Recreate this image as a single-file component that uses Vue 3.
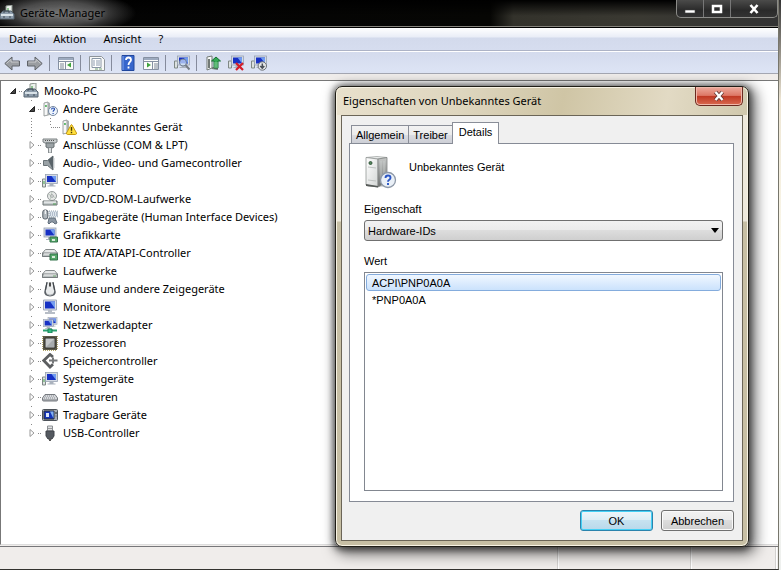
<script setup>
import { ref } from 'vue'

const pc = (x, y) => `<g transform="translate(${x} ${y})"><rect x="0" y="0" width="12" height="9" fill="#d5dbe4" stroke="#98a2b2" stroke-width=".8"/><path d="M1.5 1.5h9v6h-9z" fill="#1730c4"/><path d="M6 1.5h4.500v6z" fill="#6f9bf0"/><path d="M4 9h4v2h2v1H2v-1h2z" fill="#aab2bd"/></g>`
const tower = '<path d="M2 2l4-1v13l-4 1z" fill="#f7f8f8" stroke="#858b8b" stroke-width=".8"/><path d="M6 1l2 1v12l-2 .5z" fill="#a9afae"/><path d="M3.200 4h1.500v2H3.200z" fill="#3ca94a"/>'
const drive = '<path d="M3.500 6.500h9L15.500 10v3.500H.5V10z" fill="#e6e8e8" stroke="#868b8c"/><path d="M.5 10h15v3.500H.5z" fill="#b9bfbf" stroke="#777d7e"/><path d="M2 11h12" stroke="#f8f8f8"/>'
const icons = {
  pc: '<path d="M7 1l6-1v8H7z" fill="#edf2ed" stroke="#8b938d"/><path d="M9 3v5" stroke="#70b574" stroke-width="1.500"/><path d="M1 9l3-3h8l3 3v5H1z" fill="#8d9cab" stroke="#586672"/><path d="M2 9h12v2H2z" fill="#d9e2e8"/><path d="M5 8V6h5v2M4 12h2M10 12h2" stroke="#3f4b55" fill="none"/>',
  unknown: tower + '<circle cx="11" cy="10" r="4.500" fill="#edf4fc" stroke="#7788a0"/><path d="M9.500 8.500q.2-1.500 1.600-1.500t1.400 1.300c0 1-1.400 1-1.400 2.400M11.100 12v1" fill="none" stroke="#274eaf" stroke-width="1.200"/>',
  warning: tower + '<path d="M10 6q.5-1 1 0l4.500 8q.3 1.200-.8 1.500H6.300q-1.100-.3-.8-1.500z" fill="#ffe03e" stroke="#c79a12"/><path d="M10.500 8v3.700M10.500 12.800v1.400" stroke="#4a3a00" stroke-width="1.400"/>',
  port: '<path d="M1 2h14v3l-2 1H3L1 5z" fill="#c8cccd" stroke="#7c8284"/><path d="M3 3.500h10" stroke="#555" stroke-dasharray="1 1"/><path d="M4 6h8v4l-2 1H6l-2-1z" fill="#9ba2a5" stroke="#697073"/><path d="M6.500 11v5h3v-5" fill="#e0e3e4" stroke="#898f91"/>',
  audio: '<path d="M1.500 5.500h4L11 1v14L5.500 10.500h-4z" fill="#9aa2a6" stroke="#697277"/><path d="M6 5l5-4v14" fill="#596369"/><path d="M12 3v10" stroke="#c8cdd0"/>',
  computer: '<path d="M.5 6h3v8h-3z" fill="#dce1e0" stroke="#7f8885"/><path d="M2 8v3" stroke="#47a64a"/>' + pc(3.5, 1.5),
  optical: '<circle cx="10" cy="5" r="4.500" fill="#e6e8e7" stroke="#969b9c"/><path d="M10 .8L8 9M6 3l8 4" stroke="#bdc9bf"/><circle cx="10" cy="5" r="1.300" fill="#fff" stroke="#9a9f9f"/><path d="M1 10h14v4H1z" fill="#c5cbcc" stroke="#6d7475"/><path d="M2 11h12" stroke="#fff"/><path d="M11 13h3" stroke="#4e9d52"/>',
  input: '<rect x=".8" y="1" width="5" height="9" rx="2" fill="#b0b7bd" stroke="#555e67"/><path d="M3.300 1v4" stroke="#fff"/><rect x="7" y="2" width="8.500" height="6" fill="#dfe7ee" stroke="#92a0ad" stroke-dasharray="1 1"/><path d="M8 4h7M8 6h7" stroke="#8291a5" stroke-dasharray="1 1"/><path d="M6 14l1-5h6l2 5-2 1-2-2H9l-2 2z" fill="#8b96a2" stroke="#63707d"/>',
  graphics: pc(2, 1) + '<path d="M8 10h7.500v5H8z" fill="#55a768" stroke="#32734a"/><path d="M10 12h3v2h-3z" fill="#d9ebdc"/>',
  ide: '<g transform="translate(0 -2)">' + drive + '</g><path d="M8 9h7.500v6H8z" fill="#55a768" stroke="#32734a"/><path d="M10 11h3v2h-3z" fill="#d9ebdc"/>',
  drive: '<g transform="translate(0 1)">' + drive + '</g><path d="M11 13h3" stroke="#71a56f"/>',
  mouse: '<path d="M4.500 1h7l2.300 10q0 4-5.800 4.500Q2.200 15 2.200 11z" fill="#5c6167"/><path d="M5.500 1h5l1.500 8q1 4-4 5.500-5-1.500-4-5.500z" fill="#e9ebec"/><path d="M5 1.500L3.500 9M11 1.500L12.500 9" stroke="#43484d" stroke-width="1.200"/><path d="M4 12q4 3 8 0-1 2.500-4 2.500T4 12z" fill="#aeb2b6"/><path d="M8 1.500v4" stroke="#222" stroke-width="1.600"/>',
  monitor: '<path d="M1.500 1h13v10h-13z" fill="#dbe0e9" stroke="#a2aabb"/><path d="M3 2.500h10v7H3z" fill="#1631c4"/><path d="M8 2.500h5v7z" fill="#759df0"/><path d="M6 11h4v2h3v2H3v-2h3z" fill="#b7bdc6"/>',
  network: '<g transform="translate(6 .5) scale(.75)">' + pc(0, 0) + '</g><g transform="translate(1.500 2.500) scale(.8)">' + pc(0, 0) + '</g><path d="M1 13.500h14" stroke="#2ca171" stroke-width="2"/><path d="M6 12h4v4H6z" fill="#36ba83" stroke="#168157"/>',
  cpu: '<path d="M1 1h14v14H1z" fill="#5b5948"/><path d="M1 15.500h14M15.500 1v14M.5 1v14" stroke="#b2a66b" stroke-dasharray="1 1"/><path d="M3 3h10v10H3z" fill="#c5c8c9" stroke="#2d2d28"/><path d="M4 12L12 4v8z" fill="#a8acad"/>',
  storage: '<path d="M11 4L8 1.500 1.800 7.500 8 14l3-2.800" fill="none" stroke="#5c5e60" stroke-width="2.800"/><path d="M7 7.500h8.500M11 4.500v6" stroke="#77797b" stroke-width="2"/>',
  keyboard: '<path d="M3 5.500h10L15.500 9v2q0 1-1 1H1.500q-1 0-1-1V9z" fill="#d7d9dc" stroke="#777b80"/><path d="M3 7h10M2 9h12" stroke="#868b92" stroke-dasharray="1 1"/><path d="M1 11h14" stroke="#777b80"/>',
  portable: '<rect x=".5" y="2.500" width="15" height="11" rx="1" fill="#a9aeb5" stroke="#4c5259"/><path d="M2 4h10v8H2z" fill="#1434b9" stroke="#2b3038"/><path d="M8 4.500h3.500v7z" fill="#83b1ef"/><path d="M4 6h3v4H4z" fill="#dbe7fb"/><circle cx="14" cy="6" r="1" fill="#4d535a"/><path d="M13.500 9h1" stroke="#4d535a"/>',
  usb: '<path d="M5.500 1h5v5h-5z" fill="#dfe1e3" stroke="#8b8f93"/><path d="M7 3v1M9 3v1" stroke="#555"/><path d="M4 6h8v5l-2 3H6l-2-3z" fill="#545960" stroke="#40454b"/><path d="M8 13v3" stroke="#555" stroke-width="2"/>',
  back: '<path d="M8 2v4h7.500v5H8v4L.8 8.500z" fill="#9a9da1" stroke="#5f6368" stroke-linejoin="round"/><path d="M2.500 8.500L7 4.300V7h7.500" fill="none" stroke="#c9cbce"/>',
  forward: '<path d="M8 2v4H.5v5H8v4l7.200-6.500z" fill="#9a9da1" stroke="#5f6368" stroke-linejoin="round"/><path d="M1.500 7H9V4.300l4.500 4.200" fill="none" stroke="#c9cbce"/>',
  treeview: '<path d="M.5 2.500h15v12H.5z" fill="#fbfcfa" stroke="#8590a2"/><path d="M1 4h14" stroke="#9daabf" stroke-width="2"/><path d="M1 6.500h14M7.500 7v7" stroke="#8590a2"/><path d="M2 9h4M2 11h4M2 13h4" stroke="#7c8798"/><path d="M13 7.500v5L9 10z" fill="#3fa33d"/>',
  properties: '<path d="M.5 1.500h12l3 3v11H.5z" fill="#f8f9f8" stroke="#8e949a"/><path d="M3 3.500h9v9H3z" fill="#fff" stroke="#8996a6"/><path d="M4 6h2M7 6h4M4 8h2M7 8h4M4 10h2M7 10h4" stroke="#8c9bae"/><path d="M6 14h3M10 14h3" stroke="#75a477"/>',
  help: '<path d="M2 .5h12v15H2z" fill="#3766cc" stroke="#20469d"/><path d="M3 1v14" stroke="#7fa3ee"/><path d="M6 5q0-2.500 2.500-2.500T11 5c0 2-2.500 2-2.500 5M8.500 11.500v2" fill="none" stroke="#fff" stroke-width="1.800"/>',
  actions: '<path d="M.5 2.500h15v12H.5z" fill="#fbfcfa" stroke="#8590a2"/><path d="M1 4h14" stroke="#9daabf" stroke-width="2"/><path d="M1 6.500h14M9.500 7v7" stroke="#8590a2"/><path d="M11 9h4M11 11h4M11 13h4" stroke="#7c8798"/><path d="M4 7.500v5L8 10z" fill="#3fa33d"/>',
  scan: '<path d="M.5 6h3v7h-3z" fill="#dce1e0" stroke="#7f8885"/>' + pc(3.5, 1) + '<circle cx="9" cy="7.500" r="3.500" fill="#d5eafd" fill-opacity=".7" stroke="#748296"/><path d="M11.500 10l4 4.500" stroke="#777d85" stroke-width="2"/>',
  update: '<path d="M2 2l5-1v12l-5 2z" fill="#f8f9f8" stroke="#727a76"/><path d="M4 4v9M7 13l6 1" stroke="#727a76" stroke-width="2"/><path d="M11 2l4.500 4h-2.500v7H9V6H6.500z" fill="#35aa55" stroke="#187334"/><path d="M9 8h4M9 10h4M9 12h4" stroke="#c4eccb" stroke-width=".6"/>',
  remove: '<path d="M.5 6h3v7h-3z" fill="#dce1e0" stroke="#7f8885"/>' + pc(3.5, 1) + '<path d="M8 8l7 7M15 8l-7 7" stroke="#d51c29" stroke-width="2.200"/>',
  disable: '<path d="M.5 6h3v7h-3z" fill="#dce1e0" stroke="#7f8885"/>' + pc(3.5, 1) + '<circle cx="11.300" cy="11" r="4.200" fill="#e5e7e9" stroke="#6c7177"/><path d="M11.300 8.500v4.500M9.300 11l2 2.200 2-2.200" fill="none" stroke="#4a5058" stroke-width="1.500"/>'
}

const menus = ['Datei', 'Aktion', 'Ansicht', '?']
const toolGroups = [
  [{ icon: 'back', label: 'Zurück' }, { icon: 'forward', label: 'Vorwärts' }],
  [{ icon: 'treeview', label: 'Konsolenstruktur' }],
  [{ icon: 'properties', label: 'Eigenschaften' }],
  [{ icon: 'help', label: 'Hilfe' }, { icon: 'actions', label: 'Aktionsbereich' }],
  [{ icon: 'scan', label: 'Nach geänderter Hardware suchen' }],
  [{ icon: 'update', label: 'Treiber aktualisieren' }, { icon: 'remove', label: 'Deinstallieren' }, { icon: 'disable', label: 'Deaktivieren' }]
]
const devices = [
  { name: 'Andere Geräte', icon: 'unknown', children: [{ name: 'Unbekanntes Gerät', icon: 'warning' }] },
  { name: 'Anschlüsse (COM & LPT)', icon: 'port' },
  { name: 'Audio-, Video- und Gamecontroller', icon: 'audio' },
  { name: 'Computer', icon: 'computer' },
  { name: 'DVD/CD-ROM-Laufwerke', icon: 'optical' },
  { name: 'Eingabegeräte (Human Interface Devices)', icon: 'input' },
  { name: 'Grafikkarte', icon: 'graphics' },
  { name: 'IDE ATA/ATAPI-Controller', icon: 'ide' },
  { name: 'Laufwerke', icon: 'drive' },
  { name: 'Mäuse und andere Zeigegeräte', icon: 'mouse' },
  { name: 'Monitore', icon: 'monitor' },
  { name: 'Netzwerkadapter', icon: 'network' },
  { name: 'Prozessoren', icon: 'cpu' },
  { name: 'Speichercontroller', icon: 'storage' },
  { name: 'Systemgeräte', icon: 'computer' },
  { name: 'Tastaturen', icon: 'keyboard' },
  { name: 'Tragbare Geräte', icon: 'portable' },
  { name: 'USB-Controller', icon: 'usb' }
]
const tabs = ['Allgemein', 'Treiber', 'Details']
const activeTab = ref('Details')
const property = ref('Hardware-IDs')
const values = ['ACPI\\PNP0A0A', '*PNP0A0A']
const selected = ref(values[0])
</script>

<template>
  <div class="desktop">
    <main class="window">
      <header class="titlebar">
        <svg class="icon" viewBox="0 0 16 16" aria-hidden="true" v-html="icons.pc"></svg>
        <h1>Geräte-Manager</h1>
        <div class="caption">
          <button type="button" aria-label="Minimieren"><svg viewBox="0 0 14 12"><path d="M2 7h10v3H2z" fill="#fff" stroke="#444" stroke-width=".6" /></svg></button>
          <button type="button" aria-label="Maximieren"><svg viewBox="0 0 14 12"><path d="M3 3h8v6H3z" fill="none" stroke="#fff" stroke-width="2.500" /></svg></button>
          <button type="button" class="wide" aria-label="Schließen"><svg viewBox="0 0 14 12"><path d="M3.500 2l7 8M10.500 2l-7 8" stroke="#fff" stroke-width="2.600" /></svg></button>
        </div>
      </header>
      <nav class="menubar">
        <button v-for="m in menus" :key="m" type="button">{{ m }}</button>
      </nav>
      <div class="toolbar" role="toolbar">
        <div v-for="(group, i) in toolGroups" :key="i" class="group">
          <button v-for="t in group" :key="t.icon" type="button" :aria-label="t.label">
            <svg class="icon" viewBox="0 0 16 16" v-html="icons[t.icon]"></svg>
          </button>
        </div>
      </div>
      <section class="content">
        <ul class="tree" role="tree">
          <li role="treeitem">
            <div class="row">
              <span class="expander"><svg viewBox="0 0 8 8"><path d="M6.500 1.500v5h-5z" fill="#444" stroke="#222" /></svg></span>
              <span class="lead"></span>
              <svg class="icon" viewBox="0 0 16 16" v-html="icons.pc"></svg>
              <span class="name">Mooko-PC</span>
            </div>
            <ul class="branch" role="group">
              <li v-for="d in devices" :key="d.name" role="treeitem">
                <div class="row">
                  <span class="expander">
                    <svg v-if="d.children" viewBox="0 0 8 8"><path d="M6.500 1.500v5h-5z" fill="#444" stroke="#222" /></svg>
                    <svg v-else viewBox="0 0 8 8"><path d="M2 .5v7L6 4z" fill="#fff" stroke="#999" /></svg>
                  </span>
                  <span class="lead"></span>
                  <svg class="icon" viewBox="0 0 16 16" v-html="icons[d.icon]"></svg>
                  <span class="name">{{ d.name }}</span>
                </div>
                <ul v-if="d.children" class="branch" role="group">
                  <li v-for="c in d.children" :key="c.name" role="treeitem">
                    <div class="row">
                      <span class="lead long"></span>
                      <svg class="icon" viewBox="0 0 16 16" v-html="icons[c.icon]"></svg>
                      <span class="name">{{ c.name }}</span>
                    </div>
                  </li>
                </ul>
              </li>
            </ul>
          </li>
        </ul>
      </section>
      <footer class="statusbar"><span></span><span></span><span></span></footer>
    </main>

    <section class="dialog" role="dialog" aria-labelledby="dialog-title">
      <header class="dialog-title">
        <h2 id="dialog-title">Eigenschaften von Unbekanntes Gerät</h2>
        <button type="button" class="close" aria-label="Schließen">
          <svg viewBox="0 0 14 12"><path d="M3.500 2l7 8M10.500 2l-7 8" stroke="#5f3733" stroke-width="4" /><path d="M3.500 2l7 8M10.500 2l-7 8" stroke="#fff" stroke-width="2.400" /></svg>
        </button>
      </header>
      <form class="dialog-body" @submit.prevent>
        <div class="tabs" role="tablist">
          <button v-for="t in tabs" :key="t" type="button" role="tab" :aria-selected="t === activeTab" :class="{ active: t === activeTab }" @click="activeTab = t">{{ t }}</button>
        </div>
        <div class="pane" role="tabpanel">
          <div class="device">
            <svg viewBox="0 0 33 33" aria-hidden="true">
              <defs>
                <linearGradient id="front" x1="0" y1="0" x2="1" y2="1"><stop offset="0" stop-color="#fff" /><stop offset="1" stop-color="#d3d6d5" /></linearGradient>
                <linearGradient id="side" x1="0" y1="0" x2="0" y2="1"><stop offset="0" stop-color="#c6c8c7" /><stop offset="1" stop-color="#6e7170" /></linearGradient>
              </defs>
              <path d="M2 28h21v3H4z" fill="#999" opacity=".35" />
              <path d="M2 1.500L13 .5l10 1-9 1.500z" fill="#eceeed" stroke="#989c9b" stroke-width=".7" />
              <path d="M2 1.500L14 3v28L2 29z" fill="url(#front)" stroke="#939796" stroke-width=".8" />
              <path d="M14 3l9-1.500V26l-9 5z" fill="url(#side)" stroke="#808483" stroke-width=".8" />
              <path d="M17 5v22M20 5v21" stroke="#d5d8d7" stroke-width=".6" />
              <circle cx="6.500" cy="7" r="1.500" fill="#52845b" stroke="#35593c" />
              <path d="M4 11l8 1M4 24l8 1" stroke="#b5b9b7" stroke-width=".8" />
              <path d="M2 28l12 2v1.500L2 30z" fill="#565a58" />
              <circle cx="24" cy="24" r="7.500" fill="#eaf0f7" stroke="#8d98a7" stroke-width="1.300" />
              <path d="M21.500 22q0-2.500 2.500-2.500t2.500 2.200c0 2.300-2.500 1.800-2.500 4M24 27v2" fill="none" stroke="#2b56c4" stroke-width="1.900" />
            </svg>
            <span>Unbekanntes Gerät</span>
          </div>
          <label for="property">Eigenschaft</label>
          <div class="combo">
            <select id="property" v-model="property"><option>Hardware-IDs</option></select>
            <svg viewBox="0 0 8 5" aria-hidden="true"><path d="M0 0h8L4 5z" fill="#000" /></svg>
          </div>
          <span id="value-label" class="label">Wert</span>
          <ul class="values" role="listbox" aria-labelledby="value-label">
            <li v-for="v in values" :key="v" role="option" :aria-selected="v === selected" :class="{ selected: v === selected }" @click="selected = v">{{ v }}</li>
          </ul>
        </div>
        <div class="actions">
          <button type="submit" class="default">OK</button>
          <button type="button">Abbrechen</button>
        </div>
      </form>
    </section>
  </div>
</template>

<style>
body {
  margin: 0;
}
</style>

<style scoped>
* {
  box-sizing: border-box;
}
ul {
  list-style: none;
  margin: 0;
  padding: 0;
}
h1, h2 {
  margin: 0;
  font-size: inherit;
  font-weight: 400;
}
button {
  font: inherit;
  color: inherit;
  padding: 0;
  border: 0;
  background: none;
}
svg {
  display: block;
  flex: none;
}
.icon {
  width: 16px;
  height: 16px;
}
.desktop {
  position: relative;
  min-height: 100vh;
  display: flex;
  overflow: hidden;
  font: 11px/18px "Noto Sans", "Open Sans", sans-serif;
  color: #000;
  background: linear-gradient(#333 0, #eee6d4 100px, #fffef3 300px, #eef0ee);
}
.window {
  flex: 1;
  display: flex;
  flex-direction: column;
  margin-right: 2px;
  border-right: 1px solid #77766c;
  border-bottom: 1px solid #33322f;
  background: #f0edeb;
}
.titlebar {
  display: flex;
  align-items: center;
  height: 27px;
  border-bottom: 1px solid #85837c;
  background:
    radial-gradient(ellipse 76px 22px at 60px 13px, #6c6c6c 0, #4a4a4a 50%, transparent 100%),
    linear-gradient(#000, transparent 16px) 0 0 / 100% 100% no-repeat,
    linear-gradient(90deg, #030303 0, #060604 63%, #33322b 66%, #3a3932 82%, #333 100%);
}
.titlebar h1 {
  flex: 1;
  padding-left: 5px;
  text-shadow: 0 0 6px #999;
}
.titlebar .icon {
  margin-left: -1px;
}
.caption {
  align-self: flex-start;
  display: flex;
  height: 18px;
  border: 1px solid #8b8b88;
  border-top: 0;
  border-radius: 0 0 5px 5px;
  background: linear-gradient(#4b4b4a, #2a2a2a 60%, #333);
}
.caption button {
  display: grid;
  place-items: center;
  width: 27px;
  border-right: 1px solid #777;
}
.caption .wide {
  width: 46px;
  border-right: 0;
}
.caption svg {
  width: 14px;
  height: 12px;
}
.menubar {
  display: flex;
  gap: 17px;
  height: 24px;
  padding: 0 9px;
  border-top: 1px solid #000;
  border-bottom: 1px solid #adb3c6;
  background: linear-gradient(#fff, #e9edf7 9px, #d3daec 10px, #d6ddef);
}
.toolbar {
  display: flex;
  align-items: center;
  height: 23px;
  padding-left: 4px;
  border-top: 1px solid #fff;
  border-bottom: 1px solid #a4a7b2;
  background: linear-gradient(#d4dbed, #dde4f5);
}
.group {
  display: flex;
  gap: 7px;
  padding-right: 6px;
}
.group + .group {
  padding-left: 8px;
  border-left: 1px solid #858b9c;
}
.content {
  flex: 1;
  margin-top: 6px;
  padding-top: 1px;
  border-top: 1px solid #777;
  border-left: 1px solid #777;
  border-bottom: 1px solid #ddd;
  background: #fff;
}
.row {
  display: flex;
  align-items: center;
  height: 18px;
  padding-left: 6px;
}
.expander {
  display: grid;
  place-items: center;
  width: 12px;
  height: 14px;
  background: #fff;
}
.expander svg {
  width: 8px;
  height: 8px;
}
.lead {
  width: 4px;
  height: 1px;
  background: repeating-linear-gradient(90deg, #888 0 1px, transparent 1px 2px);
}
.lead.long {
  width: 10px;
  margin-left: 6px;
}
.name {
  padding-left: 5px;
  white-space: nowrap;
}
.branch {
  padding-left: 19px;
  background: repeating-linear-gradient(#888 0 1px, transparent 1px 3px) 30px 0 / 1px calc(100% - 9px) no-repeat;
}
.statusbar {
  display: flex;
  justify-content: flex-end;
  height: 23px;
  margin-top: 1px;
  border-top: 1px solid #77777a;
}
.statusbar span {
  border-left: 1px solid #d3d1cf;
  box-shadow: inset 1px 0 #fff;
  width: 133px;
}
.statusbar span:nth-child(2) {
  width: 85px;
}
.statusbar span:last-child {
  width: 3px;
}

.dialog {
  position: absolute;
  left: 335px;
  top: 86px;
  width: 414px;
  padding: 0 5px 5px;
  border: 1px solid #1f1d16;
  border-radius: 7px;
  background: linear-gradient(100deg, #e8e0cc 0, #ded6bf 30%, #cfc5a5 55%, #e2dac4 80%, #d0c8ad 100%) 0 0 / 100% 28px no-repeat, linear-gradient(#eee9dc 134px, #c7bfa4 135px);
  box-shadow: inset 0 0 0 1px #f8f3e4, 0 1px 6px 2px rgba(0, 0, 0, 0.5), 4px 4px 14px 3px rgba(0, 0, 0, 0.55);
}
.dialog-title {
  display: flex;
  align-items: flex-start;
  justify-content: space-between;
  height: 28px;
}
.dialog-title h2 {
  padding: 5px 0 0 2px;
}
.close {
  display: grid;
  place-items: center;
  width: 48px;
  height: 19px;
  border: 1px solid #6b2a20;
  border-top: 0;
  border-radius: 0 0 5px 5px;
  background: linear-gradient(#edaa9d, #dd7765 47%, #bf3722 50%, #d96a50);
  box-shadow: inset 0 0 0 1px #f0b8aa;
}
.close svg {
  width: 14px;
  height: 12px;
}
.dialog-body {
  padding: 6px 8px 9px 7px;
  border: 1px solid #6b6557;
  background: #f0f0f0;
  font: 11px/16px "Liberation Sans", Arial, sans-serif;
}
.tabs {
  display: flex;
  align-items: flex-end;
  height: 21px;
  padding-left: 2px;
}
.tabs button {
  height: 18px;
  padding: 0 4px;
  border: 1px solid #8a8e98;
  border-bottom: 0;
  background: linear-gradient(#f3f3f3, #ebebeb 50%, #dcdde2 51%, #cdcfd6);
}
.tabs button + button {
  border-left: 0;
}
.tabs .active {
  position: relative;
  top: 1px;
  height: 22px;
  margin-left: -1px;
  padding: 0 6px 3px;
  background: #fff;
}
.tabs button + .active {
  border-left: 1px solid #8a8e98;
}
.pane {
  padding: 12px 10px 10px 14px;
  border: 1px solid #868b96;
  background: #fff;
}
.device {
  display: flex;
  gap: 12px;
  height: 45px;
}
.device span {
  padding-top: 3px;
}
.device svg {
  width: 33px;
  height: 33px;
}
label, .label {
  display: block;
}
.combo {
  display: grid;
  align-items: center;
  margin: 3px 0 12px;
}
.combo select, .combo svg {
  grid-area: 1 / 1;
}
.combo select {
  appearance: none;
  width: 100%;
  height: 21px;
  padding: 0 3px;
  border: 1px solid #707070;
  border-radius: 3px;
  font: inherit;
  color: #000;
  background: linear-gradient(#f2f2f2, #ebebeb 49%, #dddddd 50%, #cfcfcf);
}
.combo svg {
  justify-self: end;
  width: 8px;
  height: 5px;
  margin-right: 4px;
  pointer-events: none;
}
.values {
  height: 219px;
  margin-top: 3px;
  padding: 1px;
  border: 1px solid #828790;
}
.values li {
  height: 17px;
  padding: 0 5px;
  border: 1px solid transparent;
  border-radius: 3px;
}
.values .selected {
  border-color: #84acdd;
  background: linear-gradient(#f0f7ff, #cbe2fc);
}
.actions {
  display: flex;
  justify-content: flex-end;
  gap: 8px;
  padding-top: 8px;
}
.actions button {
  width: 73px;
  height: 21px;
  border: 1px solid #707070;
  border-radius: 3px;
  background: linear-gradient(#f2f2f2, #ebebeb 49%, #dddddd 50%, #cfcfcf);
  box-shadow: inset 0 0 0 1px #fafafa;
}
.actions .default {
  border-color: #2b84ad;
  background: linear-gradient(#eef6fa, #dcedf5 49%, #c6e2f0 50%, #b8d8ea);
  box-shadow: inset 0 0 0 1px #45d0f5;
}
</style>
